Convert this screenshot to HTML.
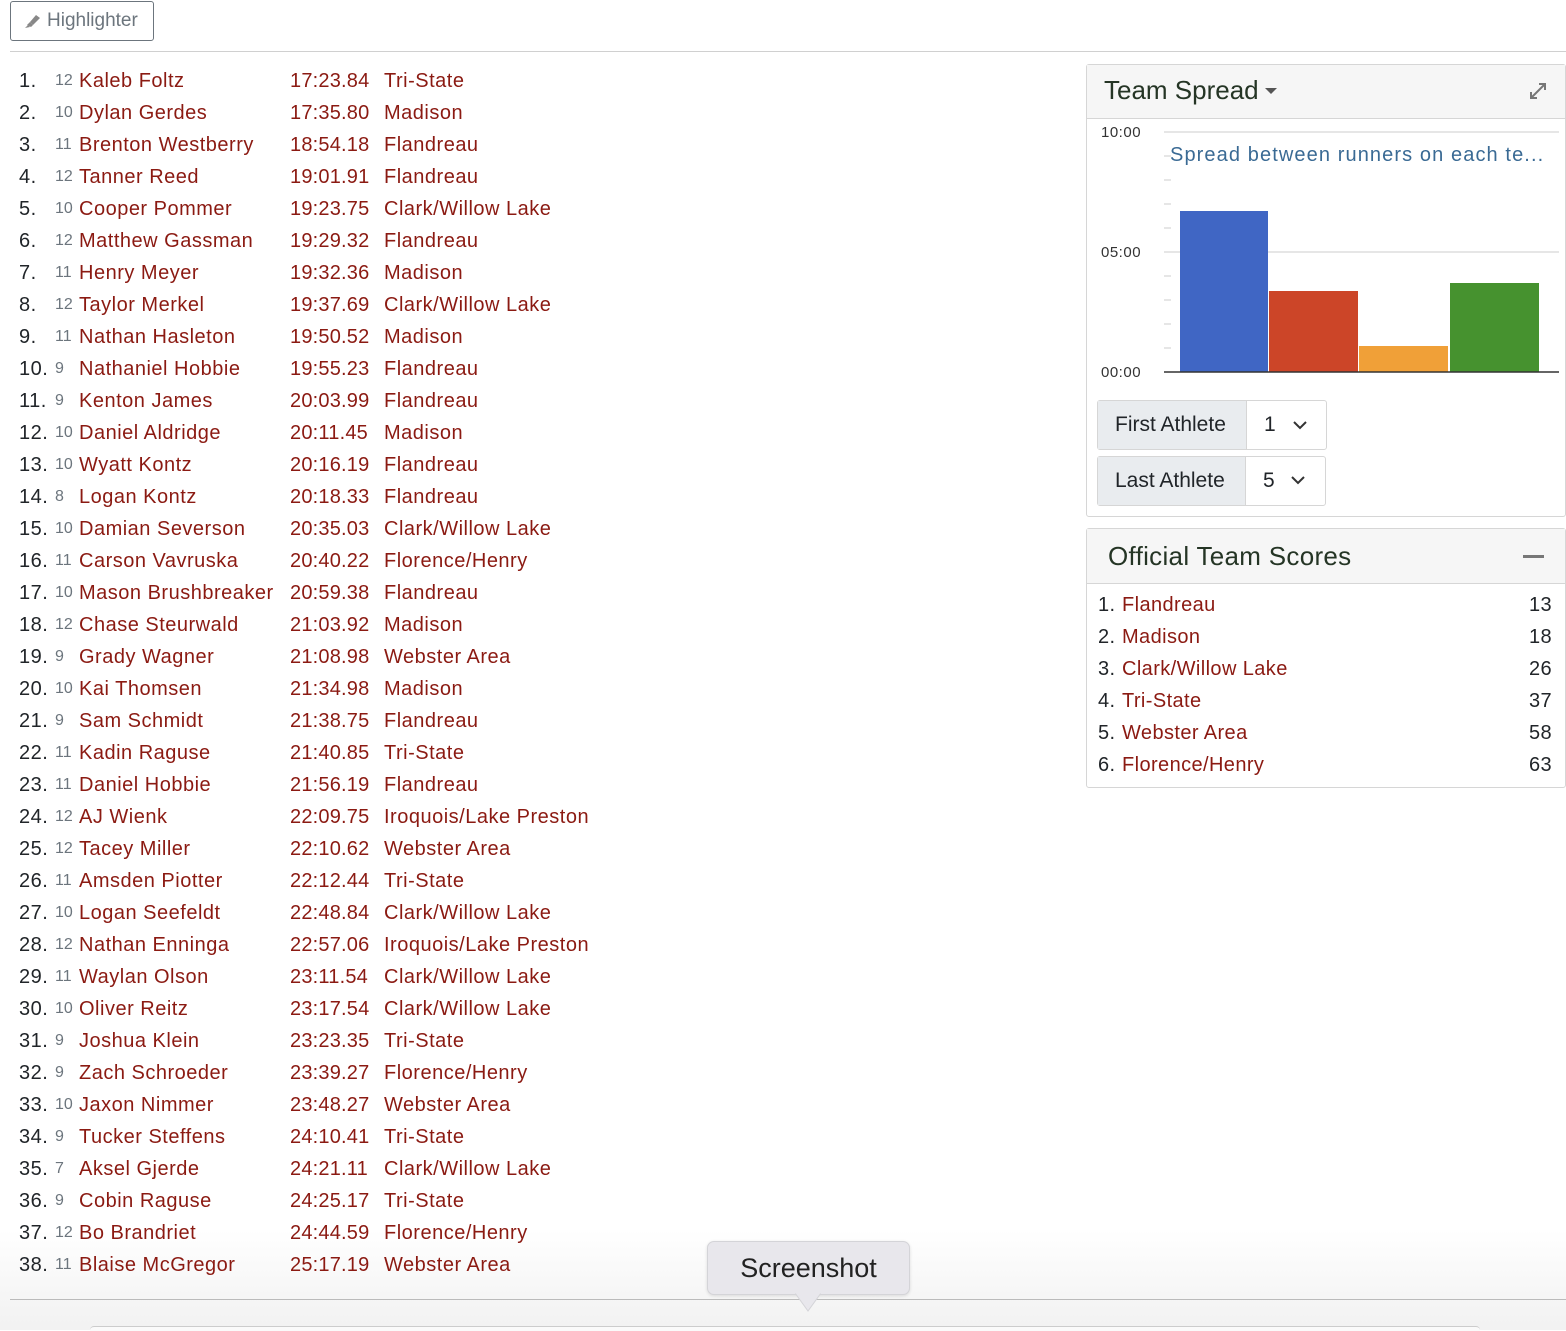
<!DOCTYPE html>
<html><head><meta charset="utf-8"><style>
body{margin:0;width:1566px;height:1330px;position:relative;overflow:hidden;background:#fff;font-family:"Liberation Sans",Arial,sans-serif;color:#212529}
.a{position:absolute;white-space:nowrap}
.r{position:absolute;left:0;height:32px;font-size:20px;line-height:32px;width:620px;letter-spacing:0.5px}
.r span{position:absolute}
.n{left:19px}.g{left:55px;font-size:16px;color:#6c757d;letter-spacing:0}.nm{left:79px;color:#8b1a12}.t{left:290px;color:#8b1a12;letter-spacing:0.2px}.tm{left:384px;color:#8b1a12}
.card{position:absolute;border:1px solid #d6d6d6;border-radius:3px;background:#fff}
.hd{background:#f6f6f6;border-bottom:1px solid #d6d6d6;color:#253525;font-size:26px}
</style></head><body>
<div class="a" style="left:0;top:1230px;width:1566px;height:100px;background:linear-gradient(rgba(240,240,240,0),rgba(240,240,240,0.9))"></div>
<div class="a" style="left:10px;top:1px;width:142px;height:38px;border:1px solid #6c757d;border-radius:3px;color:#6c757d;font-size:19px;line-height:38px;">
<svg style="position:absolute;left:13px;top:11px" width="18" height="16" viewBox="0 0 18 16"><path d="M6 9 L12 2 L16 5 L9 12 Z" fill="#888"/><path d="M3 12 L6 9 L9 12 L7 14 Z" fill="#888"/><path d="M1 15 L4 12 L6 14 Z" fill="#888"/></svg>
<span style="position:absolute;left:36px">Highlighter</span></div>
<div class="a" style="left:10px;top:51px;width:1556px;height:1px;background:#d0d0d0"></div>
<div style="position:absolute;left:0;top:65px;z-index:2">
<div class="r" style="top:0"><span class="n">1.</span><span class="g">12</span><span class="nm">Kaleb Foltz</span><span class="t">17:23.84</span><span class="tm">Tri-State</span></div>
<div class="r" style="top:32px"><span class="n">2.</span><span class="g">10</span><span class="nm">Dylan Gerdes</span><span class="t">17:35.80</span><span class="tm">Madison</span></div>
<div class="r" style="top:64px"><span class="n">3.</span><span class="g">11</span><span class="nm">Brenton Westberry</span><span class="t">18:54.18</span><span class="tm">Flandreau</span></div>
<div class="r" style="top:96px"><span class="n">4.</span><span class="g">12</span><span class="nm">Tanner Reed</span><span class="t">19:01.91</span><span class="tm">Flandreau</span></div>
<div class="r" style="top:128px"><span class="n">5.</span><span class="g">10</span><span class="nm">Cooper Pommer</span><span class="t">19:23.75</span><span class="tm">Clark/Willow Lake</span></div>
<div class="r" style="top:160px"><span class="n">6.</span><span class="g">12</span><span class="nm">Matthew Gassman</span><span class="t">19:29.32</span><span class="tm">Flandreau</span></div>
<div class="r" style="top:192px"><span class="n">7.</span><span class="g">11</span><span class="nm">Henry Meyer</span><span class="t">19:32.36</span><span class="tm">Madison</span></div>
<div class="r" style="top:224px"><span class="n">8.</span><span class="g">12</span><span class="nm">Taylor Merkel</span><span class="t">19:37.69</span><span class="tm">Clark/Willow Lake</span></div>
<div class="r" style="top:256px"><span class="n">9.</span><span class="g">11</span><span class="nm">Nathan Hasleton</span><span class="t">19:50.52</span><span class="tm">Madison</span></div>
<div class="r" style="top:288px"><span class="n">10.</span><span class="g">9</span><span class="nm">Nathaniel Hobbie</span><span class="t">19:55.23</span><span class="tm">Flandreau</span></div>
<div class="r" style="top:320px"><span class="n">11.</span><span class="g">9</span><span class="nm">Kenton James</span><span class="t">20:03.99</span><span class="tm">Flandreau</span></div>
<div class="r" style="top:352px"><span class="n">12.</span><span class="g">10</span><span class="nm">Daniel Aldridge</span><span class="t">20:11.45</span><span class="tm">Madison</span></div>
<div class="r" style="top:384px"><span class="n">13.</span><span class="g">10</span><span class="nm">Wyatt Kontz</span><span class="t">20:16.19</span><span class="tm">Flandreau</span></div>
<div class="r" style="top:416px"><span class="n">14.</span><span class="g">8</span><span class="nm">Logan Kontz</span><span class="t">20:18.33</span><span class="tm">Flandreau</span></div>
<div class="r" style="top:448px"><span class="n">15.</span><span class="g">10</span><span class="nm">Damian Severson</span><span class="t">20:35.03</span><span class="tm">Clark/Willow Lake</span></div>
<div class="r" style="top:480px"><span class="n">16.</span><span class="g">11</span><span class="nm">Carson Vavruska</span><span class="t">20:40.22</span><span class="tm">Florence/Henry</span></div>
<div class="r" style="top:512px"><span class="n">17.</span><span class="g">10</span><span class="nm">Mason Brushbreaker</span><span class="t">20:59.38</span><span class="tm">Flandreau</span></div>
<div class="r" style="top:544px"><span class="n">18.</span><span class="g">12</span><span class="nm">Chase Steurwald</span><span class="t">21:03.92</span><span class="tm">Madison</span></div>
<div class="r" style="top:576px"><span class="n">19.</span><span class="g">9</span><span class="nm">Grady Wagner</span><span class="t">21:08.98</span><span class="tm">Webster Area</span></div>
<div class="r" style="top:608px"><span class="n">20.</span><span class="g">10</span><span class="nm">Kai Thomsen</span><span class="t">21:34.98</span><span class="tm">Madison</span></div>
<div class="r" style="top:640px"><span class="n">21.</span><span class="g">9</span><span class="nm">Sam Schmidt</span><span class="t">21:38.75</span><span class="tm">Flandreau</span></div>
<div class="r" style="top:672px"><span class="n">22.</span><span class="g">11</span><span class="nm">Kadin Raguse</span><span class="t">21:40.85</span><span class="tm">Tri-State</span></div>
<div class="r" style="top:704px"><span class="n">23.</span><span class="g">11</span><span class="nm">Daniel Hobbie</span><span class="t">21:56.19</span><span class="tm">Flandreau</span></div>
<div class="r" style="top:736px"><span class="n">24.</span><span class="g">12</span><span class="nm">AJ Wienk</span><span class="t">22:09.75</span><span class="tm">Iroquois/Lake Preston</span></div>
<div class="r" style="top:768px"><span class="n">25.</span><span class="g">12</span><span class="nm">Tacey Miller</span><span class="t">22:10.62</span><span class="tm">Webster Area</span></div>
<div class="r" style="top:800px"><span class="n">26.</span><span class="g">11</span><span class="nm">Amsden Piotter</span><span class="t">22:12.44</span><span class="tm">Tri-State</span></div>
<div class="r" style="top:832px"><span class="n">27.</span><span class="g">10</span><span class="nm">Logan Seefeldt</span><span class="t">22:48.84</span><span class="tm">Clark/Willow Lake</span></div>
<div class="r" style="top:864px"><span class="n">28.</span><span class="g">12</span><span class="nm">Nathan Enninga</span><span class="t">22:57.06</span><span class="tm">Iroquois/Lake Preston</span></div>
<div class="r" style="top:896px"><span class="n">29.</span><span class="g">11</span><span class="nm">Waylan Olson</span><span class="t">23:11.54</span><span class="tm">Clark/Willow Lake</span></div>
<div class="r" style="top:928px"><span class="n">30.</span><span class="g">10</span><span class="nm">Oliver Reitz</span><span class="t">23:17.54</span><span class="tm">Clark/Willow Lake</span></div>
<div class="r" style="top:960px"><span class="n">31.</span><span class="g">9</span><span class="nm">Joshua Klein</span><span class="t">23:23.35</span><span class="tm">Tri-State</span></div>
<div class="r" style="top:992px"><span class="n">32.</span><span class="g">9</span><span class="nm">Zach Schroeder</span><span class="t">23:39.27</span><span class="tm">Florence/Henry</span></div>
<div class="r" style="top:1024px"><span class="n">33.</span><span class="g">10</span><span class="nm">Jaxon Nimmer</span><span class="t">23:48.27</span><span class="tm">Webster Area</span></div>
<div class="r" style="top:1056px"><span class="n">34.</span><span class="g">9</span><span class="nm">Tucker Steffens</span><span class="t">24:10.41</span><span class="tm">Tri-State</span></div>
<div class="r" style="top:1088px"><span class="n">35.</span><span class="g">7</span><span class="nm">Aksel Gjerde</span><span class="t">24:21.11</span><span class="tm">Clark/Willow Lake</span></div>
<div class="r" style="top:1120px"><span class="n">36.</span><span class="g">9</span><span class="nm">Cobin Raguse</span><span class="t">24:25.17</span><span class="tm">Tri-State</span></div>
<div class="r" style="top:1152px"><span class="n">37.</span><span class="g">12</span><span class="nm">Bo Brandriet</span><span class="t">24:44.59</span><span class="tm">Florence/Henry</span></div>
<div class="r" style="top:1184px"><span class="n">38.</span><span class="g">11</span><span class="nm">Blaise McGregor</span><span class="t">25:17.19</span><span class="tm">Webster Area</span></div>
</div>

<div class="card" style="left:1086px;top:64px;width:478px;height:451px">
<div class="hd" style="height:53px;position:relative">
<span class="a" style="left:17px;top:10px;font-size:26px">Team Spread</span>
<svg class="a" style="left:178px;top:23px" width="12" height="7"><path d="M0 0 L12 0 L6 6Z" fill="#555"/></svg>
<svg class="a" style="left:441px;top:16px" width="20" height="20" viewBox="0 0 20 20"><path d="M3 17 L17 3 M11 3 H17 V9 M3 11 V17 H9" stroke="#777" stroke-width="2" fill="none"/></svg>
</div>
<svg class="a" style="left:0;top:54px" width="478" height="270">
<g font-family="Liberation Sans,sans-serif" font-size="15" fill="#333" letter-spacing="0.5"><text x="14" y="18">10:00</text><text x="14" y="138">05:00</text><text x="14" y="258">00:00</text></g>
<line x1="77" y1="13" x2="472" y2="13" stroke="#ccc"/><line x1="77" y1="133" x2="472" y2="133" stroke="#ccc"/>
<g stroke="#ccc"><line x1="77" y1="37" x2="84" y2="37"/><line x1="77" y1="61" x2="84" y2="61"/><line x1="77" y1="85" x2="84" y2="85"/><line x1="77" y1="109" x2="84" y2="109"/><line x1="77" y1="157" x2="84" y2="157"/><line x1="77" y1="181" x2="84" y2="181"/><line x1="77" y1="205" x2="84" y2="205"/><line x1="77" y1="229" x2="84" y2="229"/></g>
<text x="83" y="42" font-size="20" fill="#3a6a94" letter-spacing="1.1">Spread between runners on each te...</text>
<rect x="93" y="92" width="88" height="161" fill="#4066c4"/>
<rect x="182" y="172" width="89" height="81" fill="#cc4528"/>
<rect x="272" y="227" width="89" height="26" fill="#f0a038"/>
<rect x="363" y="164" width="89" height="89" fill="#46922f"/>
<line x1="77" y1="253" x2="472" y2="253" stroke="#333" stroke-width="1.5"/>
</svg>
<div class="a" style="left:10px;top:335px;width:228px;height:48px;border:1px solid #d6d6d6;border-radius:3px;font-size:21px;line-height:48px">
<span class="a" style="left:0;width:148px;height:48px;background:#e9ecef;border-right:1px solid #d6d6d6"></span><span class="a" style="left:17px">First Athlete</span><span class="a" style="left:166px">1</span>
<svg class="a" style="left:195px;top:20px" width="14" height="9"><path d="M1 1 L7 7 L13 1" stroke="#333" stroke-width="2" fill="none"/></svg></div>
<div class="a" style="left:10px;top:391px;width:227px;height:48px;border:1px solid #d6d6d6;border-radius:3px;font-size:21px;line-height:48px">
<span class="a" style="left:0;width:147px;height:48px;background:#e9ecef;border-right:1px solid #d6d6d6"></span><span class="a" style="left:17px">Last Athlete</span><span class="a" style="left:165px">5</span>
<svg class="a" style="left:193px;top:19px" width="14" height="9"><path d="M1 1 L7 7 L13 1" stroke="#333" stroke-width="2" fill="none"/></svg></div>
</div>

<div class="card" style="left:1086px;top:528px;width:478px;height:258px">
<div class="hd" style="height:54px;position:relative"><span class="a" style="left:21px;top:12px;letter-spacing:0.3px">Official Team Scores</span>
<span class="a" style="left:436px;top:26px;width:21px;height:3px;background:#777"></span></div>
<div style="position:absolute;left:0;top:60px;width:478px;font-size:20px;line-height:32px;letter-spacing:0.4px">
<div style="position:relative;height:32px"><span class="a" style="left:11px">1.</span><span class="a" style="left:35px;color:#8b1a12">Flandreau</span><span class="a" style="right:13px">13</span></div>
<div style="position:relative;height:32px"><span class="a" style="left:11px">2.</span><span class="a" style="left:35px;color:#8b1a12">Madison</span><span class="a" style="right:13px">18</span></div>
<div style="position:relative;height:32px"><span class="a" style="left:11px">3.</span><span class="a" style="left:35px;color:#8b1a12">Clark/Willow Lake</span><span class="a" style="right:13px">26</span></div>
<div style="position:relative;height:32px"><span class="a" style="left:11px">4.</span><span class="a" style="left:35px;color:#8b1a12">Tri-State</span><span class="a" style="right:13px">37</span></div>
<div style="position:relative;height:32px"><span class="a" style="left:11px">5.</span><span class="a" style="left:35px;color:#8b1a12">Webster Area</span><span class="a" style="right:13px">58</span></div>
<div style="position:relative;height:32px"><span class="a" style="left:11px">6.</span><span class="a" style="left:35px;color:#8b1a12">Florence/Henry</span><span class="a" style="right:13px">63</span></div>
</div></div>

<div class="a" style="left:10px;top:1299px;width:1556px;height:1px;background:#bbb"></div>
<div class="a" style="left:90px;top:1326px;width:1390px;height:4px;border-top:1px solid #ccc;border-radius:4px 4px 0 0;background:#fafafa"></div>
<div class="a" style="left:707px;top:1241px;width:201px;height:52px;background:#e8e7ec;border:1px solid #d4d4d8;border-radius:7px;box-shadow:0 1px 3px rgba(0,0,0,.12);font-size:27px;line-height:52px;text-align:center;color:#222;z-index:3">Screenshot</div>
<svg class="a" style="left:795px;top:1292px;z-index:3" width="26" height="20"><path d="M0 1 L13 19 L26 1" fill="#e8e7ec" stroke="#d4d4d8"/><rect x="0" y="0" width="26" height="1.5" fill="#e8e7ec"/></svg>
</body></html>
